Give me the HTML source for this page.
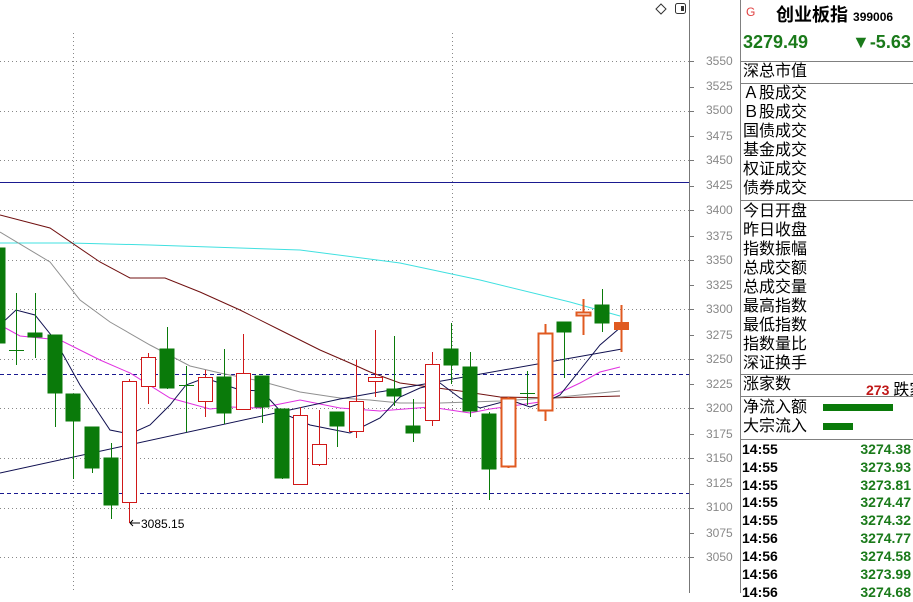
<!DOCTYPE html>
<html><head><meta charset="utf-8"><style>
body{margin:0;width:913px;height:593px;overflow:hidden;background:#fff;font-family:"Liberation Sans","Noto Sans CJK SC",sans-serif;position:relative}
.t{position:absolute;white-space:nowrap}
.lb{position:absolute;left:743px;font-size:16px;line-height:19px;color:#000;font-family:"Liberation Sans","Noto Sans CJK SC",sans-serif;white-space:nowrap}
.ax{position:absolute;left:706px;font-size:12px;color:#888;font-family:"Liberation Sans",sans-serif}
.tr{position:absolute;left:742px;width:171px;font-size:14px;font-weight:bold;height:18px}
.tr span{position:absolute;right:2px;color:#1a7a1a}
.hl{position:absolute;left:740px;width:173px;height:1px;background:#808080}
</style></head><body>
<svg width="913" height="593" style="position:absolute;left:0;top:0">
<g stroke="#888" stroke-width="1" stroke-dasharray="1,3">
<line x1="0" y1="61.5" x2="689" y2="61.5"/><line x1="0" y1="111.5" x2="689" y2="111.5"/><line x1="0" y1="160.5" x2="689" y2="160.5"/>
<line x1="0" y1="210.5" x2="689" y2="210.5"/><line x1="0" y1="260.5" x2="689" y2="260.5"/><line x1="0" y1="309.5" x2="689" y2="309.5"/>
<line x1="0" y1="359.5" x2="689" y2="359.5"/><line x1="0" y1="408.5" x2="689" y2="408.5"/><line x1="0" y1="458.5" x2="689" y2="458.5"/>
<line x1="0" y1="508.5" x2="689" y2="508.5"/><line x1="0" y1="557.5" x2="689" y2="557.5"/>
<line x1="73.5" y1="33" x2="73.5" y2="593"/><line x1="452.5" y1="33" x2="452.5" y2="593"/>
</g>
<line x1="0" y1="182.5" x2="689" y2="182.5" stroke="#1a1a90" stroke-width="1"/>
<g stroke="#1a1a90" stroke-dasharray="4,3"><line x1="0" y1="374.5" x2="689" y2="374.5"/><line x1="0" y1="493.5" x2="689" y2="493.5"/></g>
<line x1="689.5" y1="0" x2="689.5" y2="593" stroke="#777"/>
<g stroke="#777">
<line x1="689" y1="61.5" x2="694" y2="61.5"/><line x1="689" y1="87.5" x2="694" y2="87.5"/><line x1="689" y1="111.5" x2="694" y2="111.5"/><line x1="689" y1="136.5" x2="694" y2="136.5"/><line x1="689" y1="160.5" x2="694" y2="160.5"/><line x1="689" y1="186.5" x2="694" y2="186.5"/><line x1="689" y1="210.5" x2="694" y2="210.5"/><line x1="689" y1="236.5" x2="694" y2="236.5"/><line x1="689" y1="260.5" x2="694" y2="260.5"/><line x1="689" y1="285.5" x2="694" y2="285.5"/><line x1="689" y1="309.5" x2="694" y2="309.5"/><line x1="689" y1="335.5" x2="694" y2="335.5"/><line x1="689" y1="359.5" x2="694" y2="359.5"/><line x1="689" y1="384.5" x2="694" y2="384.5"/><line x1="689" y1="408.5" x2="694" y2="408.5"/><line x1="689" y1="434.5" x2="694" y2="434.5"/><line x1="689" y1="458.5" x2="694" y2="458.5"/><line x1="689" y1="484.5" x2="694" y2="484.5"/><line x1="689" y1="508.5" x2="694" y2="508.5"/><line x1="689" y1="533.5" x2="694" y2="533.5"/><line x1="689" y1="557.5" x2="694" y2="557.5"/>
</g>
<line x1="740.5" y1="0" x2="740.5" y2="593" stroke="#808080"/>
<path d="M661 4 L666 9 L661 14 L656 9 Z" fill="none" stroke="#333"/>
<rect x="675.5" y="3.5" width="10" height="10" rx="2" fill="none" stroke="#333"/><rect x="681" y="6" width="3" height="5" fill="#333"/>
<g fill="none" stroke-width="1">
<polyline stroke="#40e0e0" points="0,243 70,243 150,245 300,250 400,263 480,280 570,302 620,316"/>
<polyline stroke="#701010" points="0,215 50,228 100,262 130,278 165,278 200,292 240,310 280,330 320,350 350,363 370,372 400,383 430,387 460,391 500,397 550,398 620,396"/>
<polyline stroke="#909090" points="0,232 50,262 80,300 110,322 150,345 190,366 220,373 260,381 300,392 340,398 370,400 400,403 440,403 500,401 560,397 620,391"/>
<polyline stroke="#e030e0" points="0,325 20,336 60,340 100,360 130,373 170,398 210,409 230,407 260,408 300,400 340,408 380,411 430,407 470,413 490,409 540,402 580,383 600,372 620,367"/>
<polyline stroke="#101050" points="0,325 16,310 35,315 55,340 80,385 110,430 130,434 150,425 170,405 186,385 205,378 240,390 262,391 282,413 310,425 335,430 350,433 380,418 400,397 420,388 440,383 460,398 480,408 510,400 530,407 550,400 560,395 580,370 600,345 621,327"/>
<polyline stroke="#101050" points="0,473 340,399 622,349"/>
</g>
<g stroke-width="1">
<g fill="#0a7a0a" stroke="#0a7a0a">
<rect x="-5" y="248" width="10" height="95"/>
<line x1="16.5" y1="293" x2="16.5" y2="365"/><line x1="9" y1="350.5" x2="24" y2="350.5"/>
<line x1="35.5" y1="293" x2="35.5" y2="358"/><rect x="28" y="333" width="14" height="4"/>
<line x1="55.5" y1="335" x2="55.5" y2="427"/><rect x="48" y="335" width="14" height="58"/>
<line x1="73.5" y1="394" x2="73.5" y2="479"/><rect x="66" y="394" width="14" height="27"/>
<line x1="92.5" y1="427" x2="92.5" y2="473"/><rect x="85" y="427" width="14" height="41"/>
<line x1="111.5" y1="443" x2="111.5" y2="519"/><rect x="104" y="458" width="14" height="47"/>
<line x1="167.5" y1="327" x2="167.5" y2="389"/><rect x="160" y="349" width="14" height="39"/>
<line x1="186.5" y1="366" x2="186.5" y2="432"/><line x1="179" y1="385.5" x2="194" y2="385.5"/>
<line x1="224.5" y1="349" x2="224.5" y2="424"/><rect x="217" y="377" width="14" height="36"/>
<line x1="262.5" y1="376" x2="262.5" y2="423"/><rect x="255" y="376" width="14" height="31"/>
<line x1="282.5" y1="409" x2="282.5" y2="479"/><rect x="275" y="409" width="14" height="69"/>
<line x1="337.5" y1="412" x2="337.5" y2="447"/><rect x="330" y="412" width="14" height="14"/>
<line x1="394.5" y1="336" x2="394.5" y2="406"/><rect x="387" y="389" width="14" height="7"/>
<line x1="413.5" y1="399" x2="413.5" y2="442"/><rect x="406" y="426" width="14" height="7"/>
<line x1="451.5" y1="323" x2="451.5" y2="384"/><rect x="444" y="349" width="14" height="16"/>
<line x1="470.5" y1="352" x2="470.5" y2="417"/><rect x="463" y="367" width="14" height="44"/>
<line x1="489.5" y1="412" x2="489.5" y2="500"/><rect x="482" y="414" width="14" height="55"/>
<line x1="527.5" y1="371" x2="527.5" y2="405"/><line x1="520" y1="393.5" x2="535" y2="393.5"/>
<line x1="564.5" y1="322" x2="564.5" y2="378"/><rect x="557" y="322" width="14" height="10"/>
<line x1="602.5" y1="289" x2="602.5" y2="332"/><rect x="595" y="305" width="14" height="18"/>
</g>
<g fill="#fff" stroke="#d01818">
<line x1="129.5" y1="379" x2="129.5" y2="523"/><rect x="122.5" y="381.5" width="14" height="121"/>
<line x1="148.5" y1="353" x2="148.5" y2="404"/><rect x="141.5" y="357.5" width="14" height="29"/>
<line x1="205.5" y1="370" x2="205.5" y2="417"/><rect x="198.5" y="377.5" width="14" height="24"/>
<line x1="243.5" y1="334" x2="243.5" y2="410"/><rect x="236.5" y="373.5" width="14" height="36"/>
<line x1="300.5" y1="407" x2="300.5" y2="485"/><rect x="293.5" y="415.5" width="14" height="69"/>
<line x1="319.5" y1="410" x2="319.5" y2="466"/><rect x="312.5" y="444.5" width="14" height="20"/>
<line x1="356.5" y1="360" x2="356.5" y2="438"/><rect x="349.5" y="401.5" width="14" height="30"/>
<line x1="375.5" y1="330" x2="375.5" y2="397"/><rect x="368.5" y="377.5" width="14" height="4"/>
<line x1="432.5" y1="352" x2="432.5" y2="426"/><rect x="425.5" y="364.5" width="14" height="56"/>
</g>
<g fill="#fff" stroke="#e05a20" stroke-width="2">
<line x1="508.5" y1="397" x2="508.5" y2="468"/><rect x="501.5" y="398.5" width="14" height="68"/>
<line x1="545.5" y1="324" x2="545.5" y2="421"/><rect x="538.5" y="333.5" width="14" height="77"/>
<line x1="583.5" y1="299" x2="583.5" y2="335"/><rect x="576.5" y="312.5" width="14" height="3"/>
<line x1="621.5" y1="305" x2="621.5" y2="352"/><rect x="615" y="323" width="13" height="6" fill="#e05a20"/>
</g>
</g>
<path d="M130 523 L140 523 M130 523 L133 520 M130 523 L133 526" stroke="#000" fill="none"/>
<text x="141" y="528" font-size="12" font-family="Liberation Sans" fill="#000">3085.15</text>
<rect x="823" y="404" width="70" height="7" fill="#0a7a0a"/>
<rect x="823" y="423" width="30" height="7" fill="#0a7a0a"/>
</svg>
<div class="ax" style="top:54px">3550</div><div class="ax" style="top:79px">3525</div><div class="ax" style="top:103px">3500</div><div class="ax" style="top:129px">3475</div><div class="ax" style="top:153px">3450</div><div class="ax" style="top:178px">3425</div><div class="ax" style="top:203px">3400</div><div class="ax" style="top:229px">3375</div><div class="ax" style="top:253px">3350</div><div class="ax" style="top:278px">3325</div><div class="ax" style="top:302px">3300</div><div class="ax" style="top:328px">3275</div><div class="ax" style="top:352px">3250</div><div class="ax" style="top:377px">3225</div><div class="ax" style="top:401px">3200</div><div class="ax" style="top:427px">3175</div><div class="ax" style="top:451px">3150</div><div class="ax" style="top:476px">3125</div><div class="ax" style="top:500px">3100</div><div class="ax" style="top:526px">3075</div><div class="ax" style="top:550px">3050</div>

<div class="t" style="left:746px;top:5px;font-size:12px;color:#e04040">G</div>
<div class="t" style="left:776px;top:1px;font-size:18px;font-weight:bold;color:#000">创业板指 <span style="font-size:12px">399006</span></div>
<div class="t" style="left:743px;top:32px;font-size:18px;font-weight:bold;color:#1a7a1a">3279.49</div>
<div class="t" style="left:852px;top:32px;font-size:18px;font-weight:bold;color:#1a7a1a">▼-5.63</div>
<div class="hl" style="top:61px"></div>
<div class="lb" style="top:62px">深总市值</div>
<div class="hl" style="top:83px"></div>
<div class="lb" style="top:84px">Ａ股成交<br>Ｂ股成交<br>国债成交<br>基金成交<br>权证成交<br>债券成交</div>
<div class="hl" style="top:200px"></div>
<div class="lb" style="top:202px">今日开盘<br>昨日收盘<br>指数振幅<br>总成交额<br>总成交量<br>最高指数<br>最低指数<br>指数量比<br>深证换手</div>
<div class="hl" style="top:374px"></div>
<div class="lb" style="top:375px">涨家数</div>
<div class="t" style="left:866px;top:376px;font-size:14px;font-weight:bold;color:#c01818">273 <span style="font-weight:normal;color:#000;font-size:16px">跌家</span></div>
<div class="hl" style="top:396px"></div>
<div class="lb" style="top:398px">净流入额<br>大宗流入</div>
<div class="hl" style="top:439px"></div>
<div class="tr" style="top:441px">14:55<span>3274.38</span></div>
<div class="tr" style="top:459px">14:55<span>3273.93</span></div>
<div class="tr" style="top:477px">14:55<span>3273.81</span></div>
<div class="tr" style="top:494px">14:55<span>3274.47</span></div>
<div class="tr" style="top:512px">14:55<span>3274.32</span></div>
<div class="tr" style="top:530px">14:56<span>3274.77</span></div>
<div class="tr" style="top:548px">14:56<span>3274.58</span></div>
<div class="tr" style="top:566px">14:56<span>3273.99</span></div>
<div class="tr" style="top:584px">14:56<span>3274.68</span></div>
</body></html>
